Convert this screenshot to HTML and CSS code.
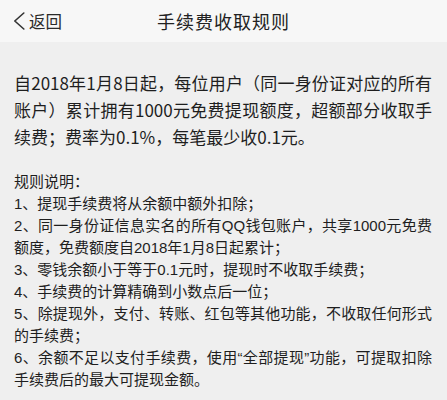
FILE: index.html
```html
<!DOCTYPE html>
<html lang="zh-CN">
<head>
<meta charset="utf-8">
<title>手续费收取规则</title>
<link rel="stylesheet" href="styles.css">
</head>
<body>
<header class="nav">
  <a class="nav-back" href="#">
    <svg class="nav-chevron" width="12" height="18" viewBox="0 0 12 18" aria-hidden="true">
      <path d="M10.8 1 L1.8 9 L10.8 17" fill="none" stroke="#333" stroke-width="1.6" stroke-linecap="round" stroke-linejoin="round"/>
    </svg>
    <span>返回</span>
  </a>
  <h1 class="nav-title">手续费收取规则</h1>
</header>
<main class="content">
  <p class="intro">自2018年1月8日起，每位用户（同一身份证对应的所有账户）累计拥有1000元免费提现额度，超额部分收取手续费；费率为0.1%，每笔最少收0.1元。</p>
  <div class="rules">
    <p>规则说明：</p>
    <p>1、提现手续费将从余额中额外扣除；</p>
    <p>2、同一身份证信息实名的所有QQ钱包账户，共享1000元免费额度，免费额度自2018年1月8日起累计；</p>
    <p>3、零钱余额小于等于0.1元时，提现时不收取手续费；</p>
    <p>4、手续费的计算精确到小数点后一位；</p>
    <p>5、除提现外，支付、转账、红包等其他功能，不收取任何形式的手续费；</p>
    <p>6、余额不足以支付手续费，使用“全部提现”功能，可提取扣除手续费后的最大可提现金额。</p>
  </div>
</main>
</body>
</html>
```

FILE: styles.css
```css
html, body {
  margin: 0;
  padding: 0;
}

body {
  background: #efefef;
  color: #1e1e1e;
  font-family: "Noto Sans CJK SC", "Noto Sans", sans-serif;
  min-height: 400px;
}

.nav {
  position: relative;
  height: 42px;
  background: #f7f7f7;
  display: flex;
  align-items: center;
  justify-content: center;
}

.nav-back {
  position: absolute;
  left: 13px;
  top: 0;
  height: 42px;
  display: flex;
  align-items: center;
  gap: 4px;
  color: #2a2a2a;
  text-decoration: none;
  font-size: 16.5px;
}

.nav-chevron {
  display: block;
}

.nav-title {
  margin: 0;
  font-size: 18px;
  font-weight: normal;
  color: #222;
  letter-spacing: 1px;
}

.content {
  padding: 27px 15px 0 14px;
}

.intro {
  margin: 0;
  font-size: 17px;
  line-height: 27px;
  text-align: justify;
}

/* latin digits and narrow quotation marks come from Liberation Sans */
.rules {
  margin-top: 21px;
  font-family: "Liberation Sans", "Noto Sans CJK SC", sans-serif;
  font-size: 15px;
  line-height: 22px;
  text-align: justify;
}

.rules p {
  margin: 0;
}
```
